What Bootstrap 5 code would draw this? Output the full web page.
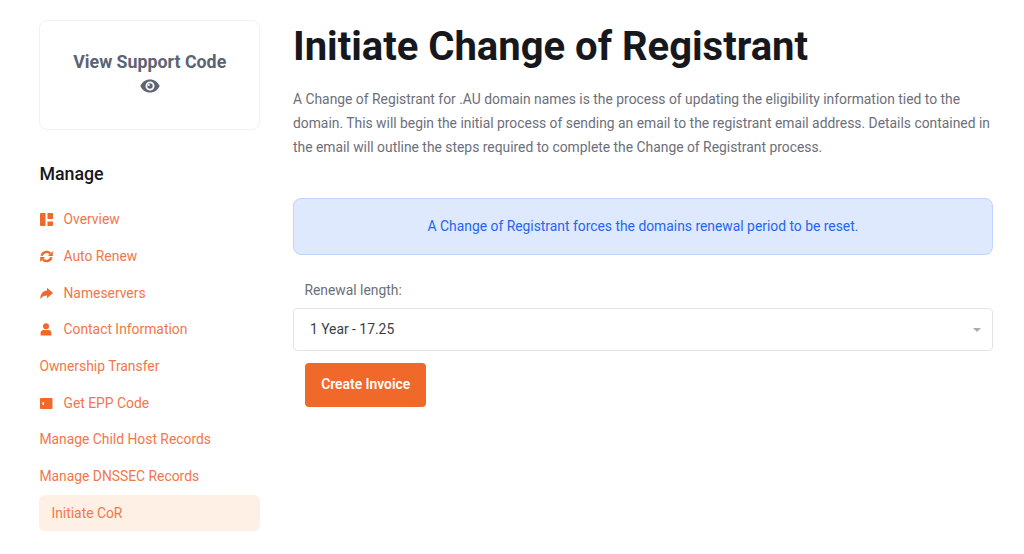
<!DOCTYPE html>
<html lang="en">
<head>
<meta charset="utf-8">
<title>Initiate Change of Registrant</title>
<link href="https://cdn.jsdelivr.net/npm/bootstrap@5.3.0/dist/css/bootstrap.min.css" rel="stylesheet">
<style>
html,body{height:554px;overflow:hidden}
body{font-family:Roboto,sans-serif;font-size:13.86px;color:#6c6f7a;background:#fff}
.page-wrap{padding:20px 31px 0 39.4px;gap:32.9px}
.side-col{width:220.7px;flex:none}
.main-col{flex:1;min-width:0}
.code-box{height:110px;border:1px solid #f0f1f3;border-radius:8px;color:#5d6373;font-weight:700;font-size:17.8px;line-height:22px;padding-top:30px}
.code-box svg{display:block;margin:6px auto 0}
.manage-head{font-size:17.8px;font-weight:500;color:#16181d;margin:32px 0 15.3px;line-height:24px}
.side-link{display:flex;align-items:center;height:36.7px;color:#f2774a;text-decoration:none;font-size:13.86px}
.side-link svg{width:13px;height:13px;margin-right:10.6px;flex:none;margin-left:.5px}
.side-link.on{background:#fff0e6;border-radius:6px;padding:1px 0 0 12px;height:36px}
.page-title{font-size:40px;font-weight:700;color:#16181d;line-height:52px;margin:1px 0 14px}
.lead-text{font-size:13.86px;line-height:24px;color:#6c6f7a;margin:0 0 39px}
.note-box{height:57px;background:#dfe9fe;border:1px solid #bed3fd;border-radius:8px;color:#2466f0;display:flex;align-items:center;justify-content:center;margin-bottom:25px}
.len-label{padding-left:11.500px;margin-bottom:8px;line-height:20px;display:block}
.len-select{height:43px;border:1px solid #e3e4e7;border-radius:4px;color:#3b3e46;font-size:13.86px;padding:0 16px;display:flex;align-items:center;justify-content:space-between;margin-bottom:12px}
.len-caret{width:0;height:0;border-left:4px solid transparent;border-right:4px solid transparent;border-top:4px solid #a9abb0;margin-right:-5px}
.invoice-btn{margin-left:12px;width:121.500px;height:44px;background:#f0692a;border:0;border-radius:4px;color:#fff;font-weight:600;font-size:13.86px;padding:0 0 2px}
.invoice-btn:hover{background:#f0692a;color:#fff}
</style>
</head>
<body>
<div class="d-flex page-wrap">
  <aside class="side-col">
    <div class="code-box text-center">View Support Code
      <svg width="20" height="14" viewBox="0 0 20 14" aria-hidden="true"><path fill="#5d6373" fill-rule="evenodd" d="M10 .5C5.6.5 2 3.2.3 7 2 10.800 5.600 13.500 10 13.500S18 10.800 19.700 7C18 3.200 14.400.5 10 .5zM10 11.500a4.500 4.500 0 1 1 0-9 4.500 4.500 0 0 1 0 9z"/><circle cx="10" cy="7" r="2.700" fill="#5d6373"/><circle cx="8.800" cy="5.900" r="1" fill="#fff"/></svg>
    </div>
    <div class="manage-head">Manage</div>
    <nav>
      <a class="side-link" href="#"><svg viewBox="0 0 13 13"><path fill="#f0692a" d="M0 1a1 1 0 0 1 1-1h4.500v13H1a1 1 0 0 1-1-1zM7.500 0H12a1 1 0 0 1 1 1v5H7.500zM7.500 8.500H13V12a1 1 0 0 1-1 1H7.500z"/></svg>Overview</a>
      <a class="side-link" href="#"><svg viewBox="0 0 13 13"><path fill="none" stroke="#f0692a" stroke-width="2.400" d="M1.600 5.800A5 5 0 0 1 10.200 3.600M11.400 7.200A5 5 0 0 1 2.800 9.400"/><path fill="#f0692a" d="M8 6 12.800 1v5zM5 7 .2 12V7z"/></svg>Auto Renew</a>
      <a class="side-link" href="#"><svg viewBox="0 0 13 13"><path fill="#f0692a" d="M7 .8 13 6l-6 5.200V8.400C4.300 8.400 2 9.300.3 12 .3 7 2.800 3.900 7 3.600z"/></svg>Nameservers</a>
      <a class="side-link" href="#"><svg viewBox="0 0 13 13"><circle cx="6" cy="3.300" r="3" fill="#f0692a"/><path fill="#f0692a" d="M.6 12.500V10c0-2 1.400-3 3-3h4.800c1.600 0 3 1 3 3v2.500z"/></svg>Contact Information</a>
      <a class="side-link" href="#">Ownership Transfer</a>
      <a class="side-link" href="#"><svg viewBox="0 0 13 13"><path fill="#f0692a" fill-rule="evenodd" d="M1 1h10.500a1 1 0 0 1 1 1v9a1 1 0 0 1-1 1H1a1 1 0 0 1-1-1V2a1 1 0 0 1 1-1zM2.500 5v3H4V5z"/></svg>Get EPP Code</a>
      <a class="side-link" href="#">Manage Child Host Records</a>
      <a class="side-link" href="#">Manage DNSSEC Records</a>
      <a class="side-link on" href="#">Initiate CoR</a>
    </nav>
  </aside>
  <main class="main-col">
    <h1 class="page-title">Initiate Change of Registrant</h1>
    <p class="lead-text">A Change of Registrant for .AU domain names is the process of updating the eligibility information tied to the domain. This will begin the initial process of sending an email to the registrant email address. Details contained in the email will outline the steps required to complete the Change of Registrant process.</p>
    <div class="note-box" role="alert">A Change of Registrant forces the domains renewal period to be reset.</div>
    <label class="len-label">Renewal length:</label>
    <div class="len-select"><span>1 Year - 17.25</span><span class="len-caret"></span></div>
    <button type="button" class="btn invoice-btn">Create Invoice</button>
  </main>
</div>
<script src="https://cdn.jsdelivr.net/npm/bootstrap@5.3.0/dist/js/bootstrap.bundle.min.js"></script>
</body>
</html>
